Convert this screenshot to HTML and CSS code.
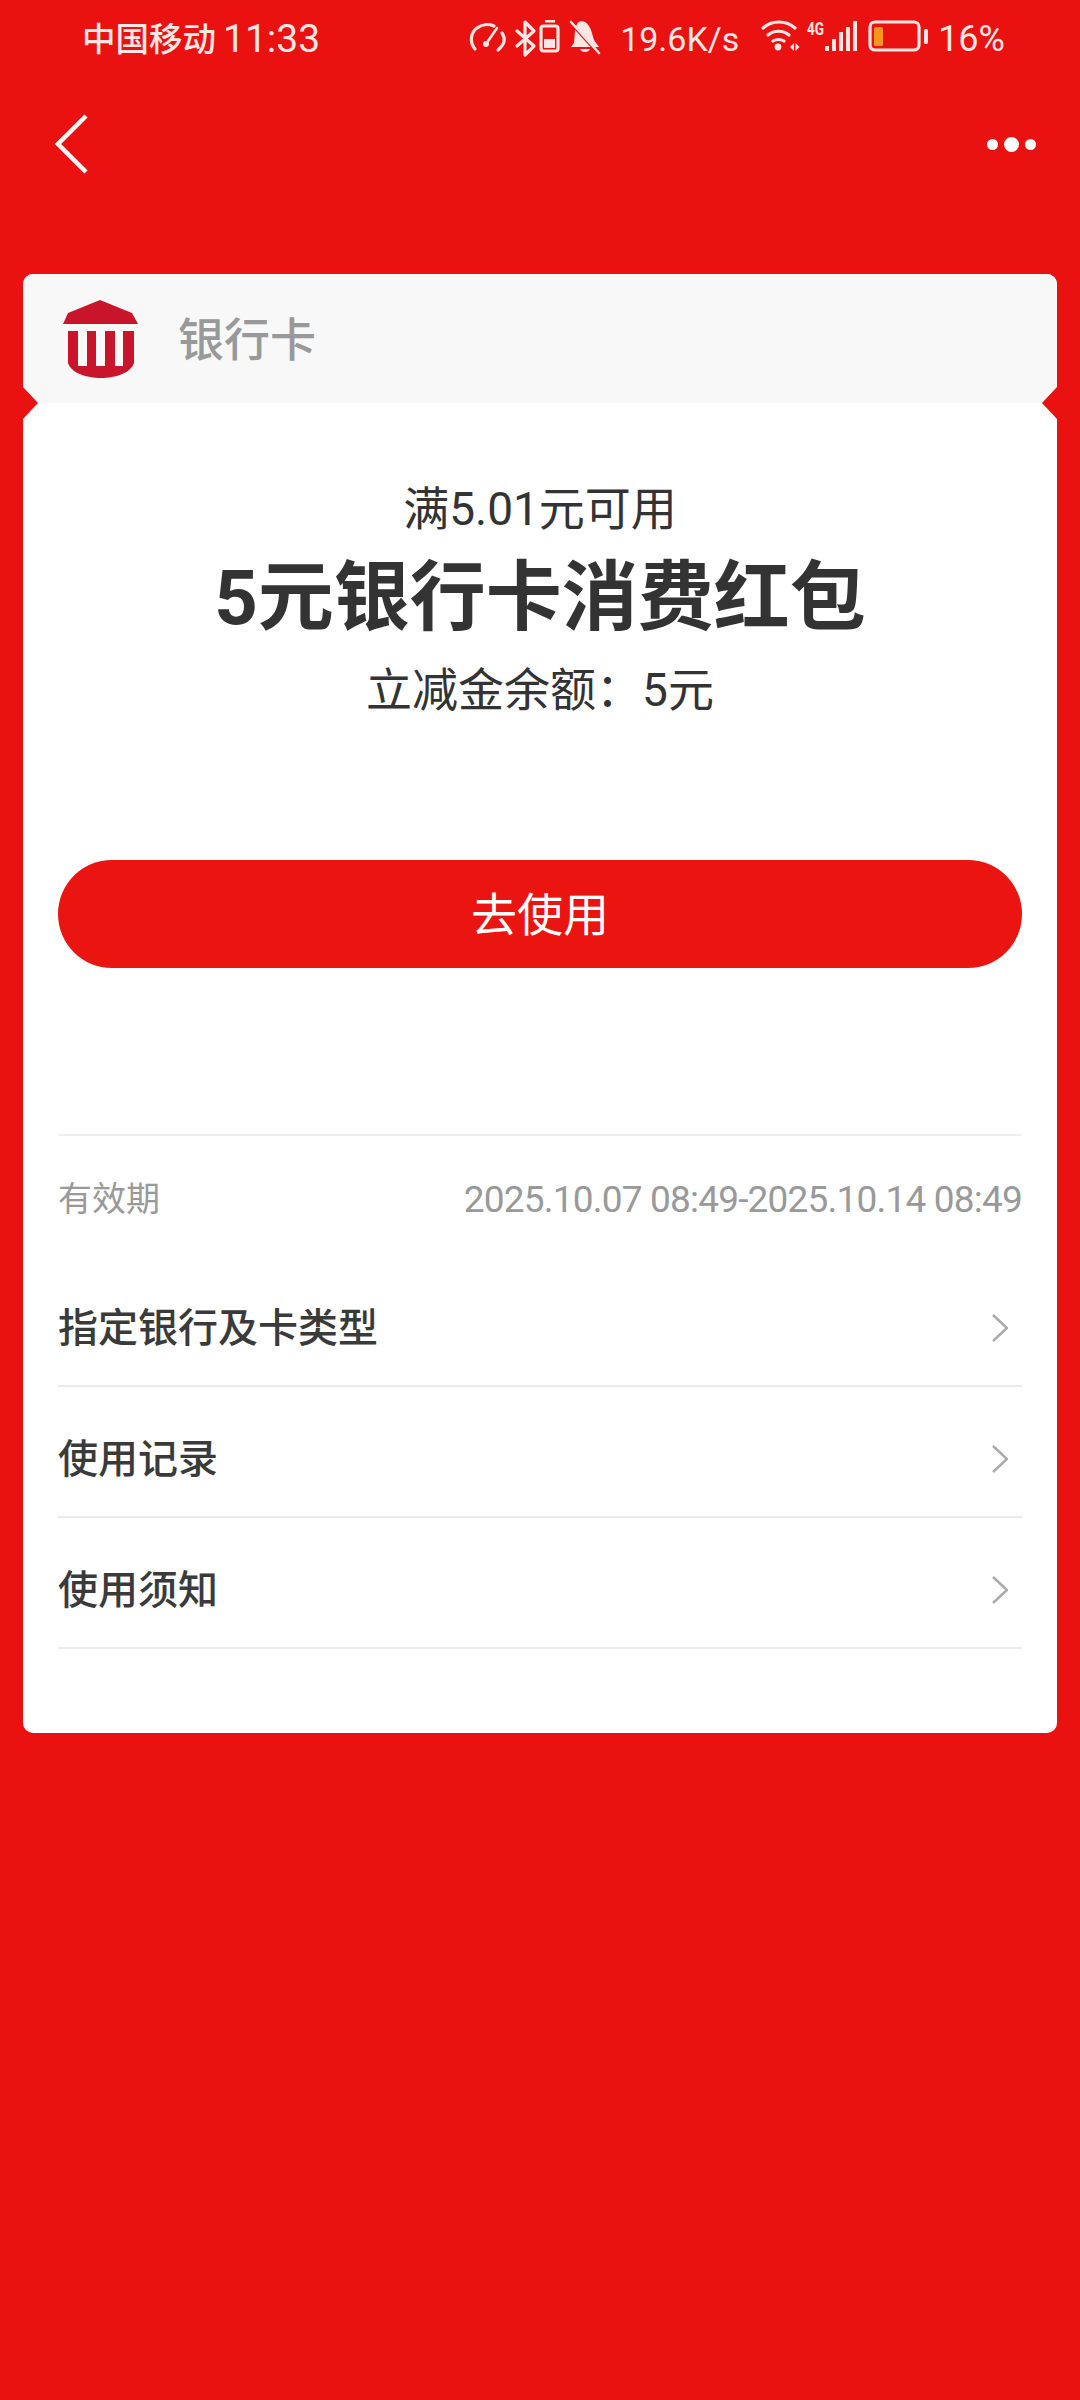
FILE: index.html
```html
<!DOCTYPE html>
<html lang="zh">
<head>
    <meta charset="UTF-8">
    <meta name="viewport" content="width=device-width, initial-scale=1.0">
    <title>银行卡消费红包</title>
    <link rel="stylesheet" href="styles.css">
</head>
<body>

    <!-- status bar -->
    <div class="status-bar">
        <span class="carrier">中国移动</span>
        <span class="clock">11:33</span>
        <svg class="status-icons-left" width="150" height="50" viewBox="0 0 150 50">
            <path class="line" d="M13 35 C7 28 9 18 15 14 C20 10 27 10 32 12"/>
            <path class="line" d="M40 19 C44 25 42 31 36 36"/>
            <path class="line thin" d="M24 30 L35 14"/>
            <circle class="solid" cx="24" cy="30" r="3"/>
            <path class="line" d="M55 17 L72 32 L63 41 V8 L72 17 L55 32"/>
            <path class="solid" d="M83 6 H93 V8.5 H83 Z"/>
            <rect class="line" x="79" y="12" width="17" height="25" rx="2.5"/>
            <rect class="solid" x="82" y="25" width="11" height="9"/>
            <path class="solid" d="M119 7 C124 7 127 11 129 16 L132 26 L137 33 L115 33 L109 33 L112 29 L113 17 C114 12 115 8 119 7 Z"/>
            <path class="solid" d="M118 35 H128 C127 39 119 39 118 35 Z"/>
            <path class="slash" d="M106 6 L136 39"/>
            <path class="line thin" d="M109 8 L137 39"/>
        </svg>
        <span class="net-speed">19.6K/s</span>
        <svg class="status-icons-right" width="190" height="50" viewBox="0 0 190 50">
            <path class="line" d="M11 14 C20 6 34 6 43 14"/>
            <path class="line" d="M16 21 C22 16 31 16 37 21"/>
            <path class="line" d="M21 27 C24 25 29 25 32 27"/>
            <circle class="solid" cx="26" cy="33" r="3.4"/>
            <path class="solid" d="M42 29 V37 L38 33 Z M43.5 29 V37 L47.5 33 Z"/>
            <text class="net-type" x="55" y="21" textLength="17" lengthAdjust="spacingAndGlyphs">4G</text>
            <rect class="solid" x="73" y="32" width="4" height="5"/>
            <rect class="solid" x="80" y="25" width="4" height="12"/>
            <rect class="solid" x="87" y="18" width="4" height="19"/>
            <rect class="solid" x="94" y="13" width="4" height="24"/>
            <rect class="solid" x="101" y="7" width="4" height="30"/>
            <rect class="line" x="118" y="8" width="49" height="28" rx="5"/>
            <rect class="battery-level" x="122" y="13" width="9" height="19" rx="1.5"/>
            <rect class="solid" x="172" y="15" width="4" height="15" rx="1.5"/>
        </svg>
        <span class="battery-text">16%</span>
    </div>

    <!-- nav -->
    <div class="nav">
        <svg width="40" height="64" viewBox="0 0 40 64">
            <path class="back-arrow" d="M33 4 L5 32 L33 60"/>
        </svg>
        <div class="more">
            <span class="dot"></span>
            <span class="dot dot-big"></span>
            <span class="dot"></span>
        </div>
    </div>

    <div class="card">
        <div class="card-head">
            <svg class="bank-logo" width="90" height="95" viewBox="0 0 90 95">
                <path class="bank-red" d="M45 9 L13 22 L8 33 H83 L77 22 Z"/>
                <path class="bank-red" d="M13 40 H23 V75 H32 V40 H41 V75 H50 V40 H60 V75 H68 V40 H79 V72 C76 82 60 87 46 87 C32 87 16 82 13 72 Z"/>
            </svg>
            <span class="card-type">银行卡</span>
        </div>

        <div class="offer">
            <div class="offer-limit">满5.01元可用</div>
            <div class="offer-title">5元银行卡消费红包</div>
            <div class="offer-balance">立减金余额：5元</div>
            <button class="use-btn">去使用</button>
        </div>

        <div class="details">
            <div class="valid-row">
                <span class="valid-label">有效期</span>
                <span class="valid-date">2025.10.07 08:49-2025.10.14 08:49</span>
            </div>
            <div class="link-row">
                <span>指定银行及卡类型</span>
                <svg class="chevron" width="16" height="28" viewBox="0 0 16 28"><path d="M1 1 L15 14 L1 27"/></svg>
            </div>
            <div class="link-row">
                <span>使用记录</span>
                <svg class="chevron" width="16" height="28" viewBox="0 0 16 28"><path d="M1 1 L15 14 L1 27"/></svg>
            </div>
            <div class="link-row">
                <span>使用须知</span>
                <svg class="chevron" width="16" height="28" viewBox="0 0 16 28"><path d="M1 1 L15 14 L1 27"/></svg>
            </div>
        </div>
    </div>

</body>
</html>
```

FILE: styles.css
```css
body {
    margin: 0;
    height: 2400px;
    overflow: hidden;
    background: #e91210;
    font-family: Roboto, "Noto Sans CJK SC", sans-serif;
    color: #333;
}

/* status bar */
.status-bar {
    display: flex;
    align-items: center;
    height: 78px;
    padding-left: 82px;
    color: #fde6e4;
}
.carrier { font-size: 33.5px; font-weight: 500; padding-bottom: 5px; }
.clock { font-size: 39px; margin-left: 7px; }
.status-icons-left { margin-left: 142px; flex: none; }
.net-speed { font-size: 34px; margin-left: 8px; width: 132px; }
.status-icons-right { flex: none; }
.battery-text { font-size: 36px; margin-left: -4px; }

.line { fill: none; stroke: #fde6e4; stroke-width: 3.2; stroke-linecap: round; stroke-linejoin: round; }
.thin { stroke-width: 2.6; }
.solid { fill: #fde6e4; }
.slash { fill: none; stroke: #e91210; stroke-width: 3; }
.net-type { font-family: Roboto, sans-serif; font-size: 19px; font-weight: 700; fill: #fde6e4; }
.battery-level { fill: #f9941e; }

/* nav */
.nav {
    display: flex;
    align-items: center;
    justify-content: space-between;
    height: 132px;
    margin-bottom: 64px;
    padding: 0 44px 0 53px;
}
.back-arrow { fill: none; stroke: #fff; stroke-width: 4.5; }
.more { display: flex; align-items: center; gap: 6px; }
.dot { width: 11px; height: 11px; border-radius: 50%; background: #fff; }
.dot-big { width: 15px; height: 15px; }

/* card */
.card {
    margin: 0 23px;
    height: 1459px;
    box-sizing: border-box;
    background: #fff;
    border-radius: 10px;
    overflow: hidden;
}
.card-head {
    position: relative;
    display: flex;
    align-items: center;
    height: 129px;
    padding-left: 32px;
    background: #f8f8f8;
}
.card-head::before,
.card-head::after {
    content: "";
    position: absolute;
    top: 113px;
    width: 15px;
    height: 32px;
    background: #e91210;
    z-index: 1;
}
.card-head::before { left: 0; clip-path: polygon(0 0, 100% 50%, 0 100%); }
.card-head::after { right: 0; clip-path: polygon(100% 0, 0 50%, 100% 100%); }
.bank-logo { flex: none; }
.bank-red { fill: #c9152b; }
.card-type { font-size: 46px; font-weight: 500; color: #999; margin-left: 33px; padding-bottom: 6px; }

.offer {
    padding: 76px 35px 0;
    text-align: center;
}
.offer-limit { font-size: 46px; line-height: 60px; }
.offer-title { font-size: 76px; font-weight: 700; line-height: 100px; margin-top: 9px; }
.offer-balance { font-size: 46px; line-height: 60px; margin-top: 12px; }
.use-btn {
    display: block;
    width: 100%;
    height: 108px;
    margin-top: 140px;
    border: none;
    border-radius: 54px;
    background: #ea1410;
    color: #fff;
    font-family: inherit;
    font-size: 46px;
    padding-bottom: 7px;
}

.details {
    margin: 166px 35px 0;
    border-top: 2px solid #efefef;
}
.valid-row {
    display: flex;
    justify-content: space-between;
    align-items: center;
    height: 120px;
    padding-top: 8px;
    padding-bottom: 8px;
    box-sizing: border-box;
    color: #999;
}
.valid-label { font-size: 34px; }
.valid-date { font-size: 37px; letter-spacing: -0.8px; white-space: nowrap; padding-top: 6px; }
.link-row {
    display: flex;
    justify-content: space-between;
    align-items: center;
    height: 131px;
    box-sizing: border-box;
    padding: 8px 14px 0 0;
    border-bottom: 2px solid #ebebeb;
    font-size: 40px;
    font-weight: 500;
    color: #3a3a3a;
}
.chevron { fill: none; stroke: #aaa; stroke-width: 2.5; flex: none; margin-top: 6px; }
```
